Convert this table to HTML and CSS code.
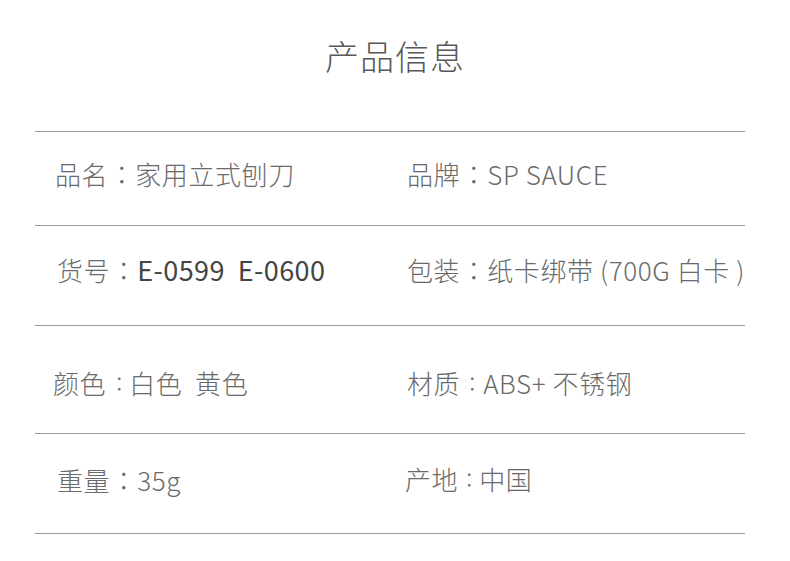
FILE: index.html
```html
<!DOCTYPE html>
<html lang="zh-CN">
<head>
<meta charset="utf-8">
<title>产品信息</title>
<link rel="stylesheet" href="styles.css">
</head>
<body>
<div class="page">
  <h1 class="title">产品信息</h1>
  <div class="table">
    <div class="row r1">
      <div class="cell"><span class="k">品名</span><span class="c">：</span><span class="v">家用立式刨刀</span></div>
      <div class="cell"><span class="k">品牌</span><span class="c">：</span><span class="v">SP SAUCE</span></div>
    </div>
    <div class="row r2">
      <div class="cell"><span class="k">货号</span><span class="c">：</span><span class="v dark">E-0599&nbsp;&nbsp;E-0600</span></div>
      <div class="cell"><span class="k">包装</span><span class="c">：</span><span class="v">纸卡绑带 (700G 白卡 )</span></div>
    </div>
    <div class="row r3">
      <div class="cell"><span class="k">颜色</span><span class="c tight">：</span><span class="v">白色&nbsp;&nbsp;黄色</span></div>
      <div class="cell"><span class="k">材质</span><span class="c tight t2">：</span><span class="v">ABS+ 不锈钢</span></div>
    </div>
    <div class="row r4">
      <div class="cell"><span class="k">重量</span><span class="c">：</span><span class="v">35g</span></div>
      <div class="cell flush"><span class="k">产地</span><span class="c tight t3">：</span><span class="v">中国</span></div>
    </div>
  </div>
</div>
</body>
</html>
```
FILE: styles.css
```css
html, body {
  margin: 0;
  padding: 0;
  background: #fff;
}
body {
  font-family: "Noto Sans CJK SC", "Noto Sans", sans-serif;
  color: #6a6a6a;
  font-weight: 300;
}
.page {
  width: 790px;
  height: 561px;
  overflow: hidden;
}
.title {
  margin: 0;
  height: 131px;
  box-sizing: border-box;
  padding-top: 32px;
  text-align: center;
  font-size: 34px;
  line-height: 48px;
  font-weight: 300;
  color: #585858;
  letter-spacing: 1px;
}
.table {
  margin: 0 45px 0 35px;
  border-top: 1px solid #999;
}
.row {
  display: grid;
  grid-template-columns: 370px 1fr;
  align-items: center;
  border-bottom: 1px solid #999;
  box-sizing: border-box;
}
.r1 { height: 94px; padding-bottom: 10px; }
.r2 { height: 100px; padding-bottom: 11px; }
.r3 { height: 108px; padding-top: 7px; }
.r4 { height: 100px; padding-bottom: 8px; }
.cell {
  font-size: 26px;
  line-height: 36px;
  white-space: nowrap;
  padding-left: 20px;
  letter-spacing: 0.6px;
}
.cell + .cell { padding-left: 2px; }
.cell + .cell.flush { padding-left: 0; }
.r2 .cell:first-child, .r4 .cell:first-child { padding-left: 22px; }
.r3 .cell:first-child { padding-left: 18px; }
.c {
  font-family: "Noto Sans CJK TC", "Noto Sans CJK SC", sans-serif;
  display: inline-block;
  width: 27px;
  text-align: center;
  letter-spacing: 0;
}
.c.tight {
  font-size: 20px;
  width: 23px;
  box-sizing: border-box;
  padding-left: 3px;
  text-align: left;
  vertical-align: 2px;
}
.c.t2 { width: 23px; padding-left: 2px; }
.c.t3 { width: 21px; padding-left: 1px; }
.dark {
  color: #444;
  font-weight: 400;
  font-size: 27px;
  letter-spacing: 0.4px;
}
```
